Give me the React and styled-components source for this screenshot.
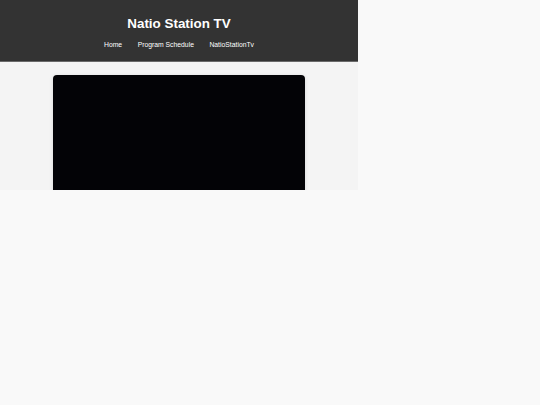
import React from "react";
import styled, { createGlobalStyle } from "styled-components";

const GlobalStyle = createGlobalStyle`
  html, body {
    margin: 0;
    padding: 0;
    background: #f9f9f9;
    font-family: "Liberation Sans", Arial, sans-serif;
  }
`;

const Frame = styled.div`
  width: 358px;
  height: 190px;
  overflow: hidden;
  background: #f4f4f4;
  display: flex;
  flex-direction: column;
`;

const Header = styled.header`
  flex-shrink: 0;
  height: 62px;
  box-sizing: border-box;
  background: #333333;
  border-bottom: 1px solid #6a6a6a;
  color: #ffffff;
  display: flex;
  flex-direction: column;
  align-items: center;
  padding-top: 16px;
`;

const Title = styled.h1`
  margin: 0;
  font-size: 13.4px;
  line-height: 16px;
  font-weight: 700;
`;

const Nav = styled.nav`
  display: flex;
  gap: 15.5px;
  margin-top: 9px;
`;

const NavLink = styled.a`
  color: #ffffff;
  font-size: 6.8px;
  line-height: 8px;
  text-decoration: none;
`;

const Main = styled.main`
  flex: 1;
  display: flex;
  justify-content: center;
  padding-top: 13px;
`;

const Player = styled.div`
  flex-shrink: 0;
  width: 252px;
  height: 160px;
  background: #030306;
  border-radius: 4px;
  box-shadow: 0 1px 4px rgba(0, 0, 0, 0.12);
`;

export default function App() {
  return (
    <>
      <GlobalStyle />
      <Frame>
        <Header>
          <Title>Natio Station TV</Title>
          <Nav>
            <NavLink href="#">Home</NavLink>
            <NavLink href="#">Program Schedule</NavLink>
            <NavLink href="#">NatioStationTv</NavLink>
          </Nav>
        </Header>
        <Main>
          <Player />
        </Main>
      </Frame>
    </>
  );
}
